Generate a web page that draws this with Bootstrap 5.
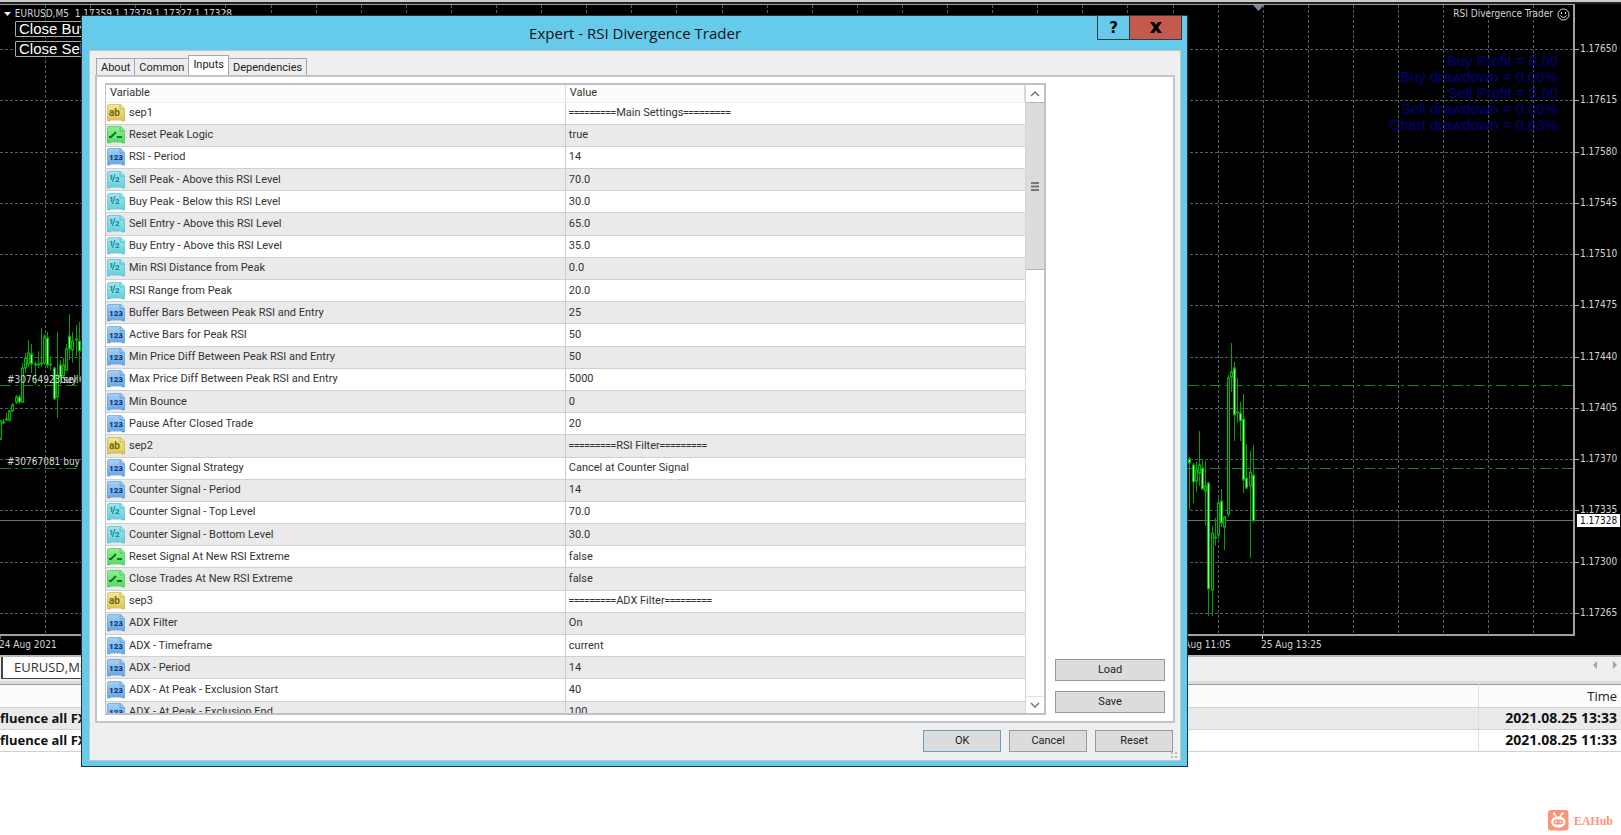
<!DOCTYPE html>
<html lang="en">
<head>
<meta charset="utf-8">
<meta name="viewport" content="width=device-width, initial-scale=1">
<title>Expert - RSI Divergence Trader</title>
<link href="https://cdn.jsdelivr.net/npm/bootstrap@5.3.0/dist/css/bootstrap.min.css" rel="stylesheet">
<style>
body{font:13px/20px "Open Sans","Noto Sans",sans-serif;color:#222;background:#fff;min-height:100vh;overflow:hidden}
button{font:inherit;color:inherit;padding:0}
.top-edge{height:4px;background:#222;border-top:2px solid #c9cac9}
.chart{height:651px;background:#000;color:#d4d4d4;font:10px/14px "DejaVu Sans Condensed","DejaVu Sans",sans-serif}
.plot{border:solid #a0a0a0;border-width:1px 2px 2px 0;height:632px}
.plot svg{left:0;top:0}
.axis{width:46px;height:632px;padding:38px 0 16px 5px}
.axis span{position:relative}
.axis span::before{content:"";position:absolute;left:-5px;top:7px;width:4px;height:1px;background:#aaa}
.price-now{right:1px;top:510px;width:43px;height:13px;line-height:13px;background:#fff;color:#111;padding-left:3px}
.dates{height:19px;line-height:18px}
.symbol-line{left:4px;top:2px}
.close-btns{left:15px;top:16px;width:110px;gap:4px}
.close-btns button{background:#000;border:1px solid #aaa;border-radius:1px;color:#fff;font:15px/14px "Liberation Sans",sans-serif;text-align:left;padding-left:3px;height:16px}
.expert{right:3px;top:2px;gap:4px}
.stats{right:15px;top:48px;color:#000080;font:15px/16px "Liberation Sans",sans-serif}
.tabstrip{height:29px;background:#efefef;border-top:2px solid #b8b8b8;border-bottom:3px solid #ddd}
.tabstrip .sheet{width:100px;height:22px;background:#fff;border:solid #444;border-width:0 1px 1px 2px;color:#333;text-decoration:none;padding-left:11px;margin-left:1px}
.log{table-layout:fixed;width:100%;border-top:1px solid #999}
.log th,.log td{height:22px;line-height:20px;padding:0 4px 1px 0;border-bottom:1px solid #d2d2d2;white-space:nowrap}
.log th{font-weight:400;background:#fcfcfc;height:23px}
.log td{font-weight:700;color:#111}
.log td.when{font-size:14px}
.log .when{width:143px;text-align:right;border-left:1px solid #ddd}
.log .alt td{background:#eaeaea}
.brand{right:8px;bottom:4px;color:#ff9377;font:700 12px/20px "Liberation Serif",serif;gap:5px}
.dialog{left:81px;top:15px;width:68.3vw;border:1px solid #253038;background:#66caea;padding:0 6px 5px 7px;font:11px/16px Roboto,"Liberation Sans",sans-serif}
.titlebar{height:34px;font:15px/34px "Open Sans","Noto Sans",sans-serif;color:#111}
.win-btns{right:-1px;top:-1px}
.win-btns button{display:flex;align-items:center;justify-content:center;height:25px;border:1px solid #333a40;background:#66caea;font:700 15px/22px "DejaVu Sans",sans-serif;color:#000}
.win-btns .help{width:33px}.win-btns .shut{width:53px;margin-left:-1px;background:#c4594e}
.client{background:#efefef;border:1px solid #c3c6c8;padding:5px 5px 8px}
.tabs{height:19px;padding-left:2px}
.tabs button{height:17px;line-height:15px;border:1px solid #a5a8b0;border-bottom:0;background:#ededed;margin-left:-1px}
.tabs .on{height:20px;background:#fff;padding-bottom:3px}
.pane{background:#fff;border:2px solid #c3c4ca;padding:6px 8px;gap:7px}
.listbox{border:2px solid #c0c1c8;border-left-width:1px;height:632px}
.vars{width:100%;table-layout:fixed;height:639px;color:#333}
.vars th{height:17px;line-height:16px;padding:0 4px;background:#fcfcfc;font-weight:400;font-size:11px;border-bottom:1px solid #eee;border-right:1px solid #ddd}
.vars td{padding:0 3px;line-height:16px;border-bottom:1px solid #d0d0d0;white-space:nowrap}
.vars td:first-child{border-right:1px solid #ccc;padding-left:1px}
.vars tbody tr:nth-child(even){background:#eaeaea}
.vars svg{width:18px;height:18px;margin-right:4px;vertical-align:middle}
.rule{font:700 9px/16px "Liberation Sans",sans-serif}
.scroller{width:19px;border-left:1px solid #d5d5d5}
.scroller button{height:17px;border:0;background:#fff;line-height:0}
.scroller .thumb{height:168px;background:#dcdcdc;border:solid #b5b5b5;border-width:1px 0}
.side{width:112px;padding:0 0 2px 2px;gap:10px}
.cmd{height:22px;background:#dcdcdc;border:1px solid #999;color:#222;font-size:11px}
.actions{gap:8px;padding:7px 2px 0}
.actions .cmd{width:78px}
.actions .ok{border-color:#6c9dc2}
.grip{right:2px;bottom:1px}
</style>
</head>
<body class="position-relative">
<div class="top-edge"></div>
<main class="chart position-relative">
  <div class="d-flex">
    <div class="plot flex-grow-1 position-relative overflow-hidden">
      <svg class="position-absolute w-100 h-100" id="plot" role="img" aria-label="EURUSD M5 candles"></svg>
      <div class="symbol-line position-absolute">
        <svg class="position-static" width="8" height="6"><path d="M0 1h7L3.500 5z" fill="#eee"/></svg>
        EURUSD,M5&nbsp; 1.17359 1.17379 1.17327 1.17328</div>
      <div class="close-btns position-absolute d-flex flex-column"><button type="button">Close Buy</button><button type="button">Close Sell</button></div>
      <div class="expert position-absolute d-flex align-items-center"><span>RSI Divergence Trader</span>
        <svg class="position-static" width="13" height="13" fill="none" stroke="#ddd"><circle cx="6.500" cy="6.500" r="5.500"/><path d="M3.500 7.500q3 4 6 0M4.500 4v2M8.500 4v2"/></svg></div>
      <div class="stats position-absolute text-end">Buy Profit = 0.00<br>Buy drawdown = 0.00%<br>Sell Profit = 0.00<br>Sell drawdown = 0.00%<br>Chart drawdown = 0.03%</div>
    </div>
    <div class="axis d-flex flex-column justify-content-between">
      <span>1.17650</span><span>1.17615</span><span>1.17580</span><span>1.17545</span><span>1.17510</span><span>1.17475</span><span>1.17440</span><span>1.17405</span><span>1.17370</span><span>1.17335</span><span>1.17300</span><span>1.17265</span>
    </div>
  </div>
  <div class="price-now position-absolute">1.17328</div>
  <svg class="dates d-block w-100" fill="#d4d4d4"><text x="-1" y="12">24 Aug 2021</text><text x="1170" y="12">25 Aug 11:05</text><text x="1261" y="12">25 Aug 13:25</text><path d="M0 0v3M1262.500 0v3" stroke="#ccc"/></svg>
</main>
<nav class="tabstrip d-flex justify-content-between">
  <a class="sheet" href="#">EURUSD,M5</a>
  <svg width="28" height="20" fill="#a2a2a2"><path d="M4 4v8L0 8zM20 4v8l4-4z"/></svg>
</nav>
<table class="log">
  <thead><tr><th></th><th class="when">Time</th></tr></thead>
  <tbody><tr class="alt"><td>fluence all FX</td><td class="when">2021.08.25 13:33</td></tr>
  <tr><td>fluence all FX</td><td class="when">2021.08.25 11:33</td></tr></tbody>
</table>

<section class="dialog position-absolute" role="dialog" aria-labelledby="dlgTitle">
  <header class="titlebar position-relative text-center"><span id="dlgTitle">Expert - RSI Divergence Trader</span>
    <div class="win-btns position-absolute d-flex"><button type="button" class="help">?</button><button type="button" class="shut" aria-label="Close"><svg width="12" height="11"><path d="M0 0h4l2 3 2-3h4L8 5.500 12 11H8L6 8l-2 3H0l4-5.500z"/></svg></button></div>
  </header>
  <div class="client position-relative">
    <div class="tabs d-flex align-items-end position-relative">
      <button type="button" class="px-1">About</button><button type="button" class="px-1">Common</button><button type="button" class="on px-1">Inputs</button><button type="button" class="px-1">Dependencies</button>
    </div>
    <div class="pane d-flex">
      <div class="listbox d-flex flex-grow-1 overflow-hidden">
        <table class="vars">
          <thead><tr><th>Variable</th><th>Value</th></tr></thead>
          <tbody id="rows"></tbody>
        </table>
        <div class="scroller d-flex flex-column flex-shrink-0">
          <button type="button" aria-label="Scroll up"><svg width="10" height="6"><path d="M1 5l4-4 4 4" fill="none" stroke="#777" stroke-width="1.500"/></svg></button>
          <div class="thumb d-flex align-items-center justify-content-center"><svg width="8" height="9" stroke="#777" stroke-width="2"><path d="M0 1h8M0 4.500h8M0 8h8"/></svg></div>
          <button type="button" class="mt-auto border-top" aria-label="Scroll down"><svg width="10" height="6"><path d="M1 1l4 4 4-4" fill="none" stroke="#777" stroke-width="1.500"/></svg></button>
        </div>
      </div>
      <div class="side d-flex flex-column justify-content-end flex-shrink-0"><button type="button" class="cmd">Load</button><button type="button" class="cmd">Save</button></div>
    </div>
    <div class="actions d-flex justify-content-end"><button type="button" class="cmd ok">OK</button><button type="button" class="cmd">Cancel</button><button type="button" class="cmd">Reset</button></div>
    <svg class="grip position-absolute" width="7" height="7" fill="#bbb"><path d="M0 0h2v2H0zM4 0h2v2H4zM0 4h2v2H0zM4 4h2v2H4z"/></svg>
  </div>
</section>

<div class="brand position-fixed d-flex align-items-center">
  <svg width="21" height="21"><rect width="20.500" height="20.500" rx="3" fill="#ff9377"/><path d="M6 3l2 4M14 3l-2 4" stroke="#fff" stroke-width="1.500"/><circle cx="6" cy="3.500" r="1.300" fill="#fff"/><circle cx="14.500" cy="3.500" r="1.300" fill="#fff"/><ellipse cx="10.300" cy="12" rx="7.300" ry="5.800" fill="#fff"/><rect x="5.500" y="9.500" width="9.500" height="5" rx="2.500" fill="#ff9377"/><circle cx="8" cy="12" r="1" fill="#fff"/><circle cx="12.500" cy="12" r="1" fill="#fff"/></svg>
  <span>EAHub</span>
</div>

<svg width="0" height="0" class="position-absolute" aria-hidden="true">
  <defs>
    <linearGradient id="gy" x2="0" y2="1"><stop stop-color="#f4ea92"/><stop offset="1" stop-color="#dcc653"/></linearGradient>
    <linearGradient id="gg" x2="0" y2="1"><stop stop-color="#8cf393"/><stop offset="1" stop-color="#58d664"/></linearGradient>
    <linearGradient id="gb" x2="0" y2="1"><stop stop-color="#a5d0f7"/><stop offset="1" stop-color="#66a5e4"/></linearGradient>
    <linearGradient id="gc" x2="0" y2="1"><stop stop-color="#9ce8ef"/><stop offset="1" stop-color="#67cddc"/></linearGradient>
    <path id="sheet" d="M.5 2Q.5.500 2 .5H14l3.500 4V17h-2.500l-1-1.500-1 1-1-1-1.500 1-1.500-1-1.500 1-1.500-1-1 1-1-1-1 1.500H.5z" stroke-opacity=".55"/>
    <path id="fold" d="M13 1v4h4" fill="none" stroke-opacity=".7"/>
  </defs>
</svg>

<script src="https://cdn.jsdelivr.net/npm/bootstrap@5.3.0/dist/js/bootstrap.bundle.min.js"></script>
<script>
// Type icons: s string, b bool, i integer, d double
const sheet = (stroke, fill) => `<g stroke="${stroke}"><use href="#sheet" fill="url(#${fill})"/><use href="#fold"/></g>`;
const icons = {
  s: sheet('#b7a23a', 'gy') + '<text x="2" y="12" font-size="10" font-weight="700" fill="#766a13">ab</text>',
  b: sheet('#35b748', 'gg') + '<path d="M2 11h2l5-5M10 11h5" stroke="#087a1c" stroke-width="2" fill="none"/>',
  i: sheet('#4d8ccb', 'gb') + '<text x="2" y="12" font-size="8" font-weight="900" fill="#0b3c7c">123</text>',
  d: sheet('#3fb2c2', 'gc') + '<path d="M8 3L5.500 11" stroke="#177f91" fill="none"/><text x="2" y="9" font-size="8" font-weight="700" fill="#177f91">1</text><text x="8" y="11" font-size="8" font-weight="700" fill="#177f91">2</text>'
};
// Input list: type | name | value
const inputs = `s|sep1|=Main Settings
b|Reset Peak Logic|true
i|RSI - Period|14
d|Sell Peak - Above this RSI Level|70.0
d|Buy Peak - Below this RSI Level|30.0
d|Sell Entry - Above this RSI Level|65.0
d|Buy Entry - Above this RSI Level|35.0
d|Min RSI Distance from Peak|0.0
d|RSI Range from Peak|20.0
i|Buffer Bars Between Peak RSI and Entry|25
i|Active Bars for Peak RSI|50
i|Min Price Diff Between Peak RSI and Entry|50
i|Max Price Diff Between Peak RSI and Entry|5000
i|Min Bounce|0
i|Pause After Closed Trade|20
s|sep2|=RSI Filter
i|Counter Signal Strategy|Cancel at Counter Signal
i|Counter Signal - Period|14
d|Counter Signal - Top Level|70.0
d|Counter Signal - Bottom Level|30.0
b|Reset Signal At New RSI Extreme|false
b|Close Trades At New RSI Extreme|false
s|sep3|=ADX Filter
i|ADX Filter|On
i|ADX - Timeframe|current
i|ADX - Period|14
i|ADX - At Peak - Exclusion Start|40
i|ADX - At Peak - Exclusion End|100`;
const bar = '<span class="rule">=========</span>';
document.getElementById('rows').innerHTML = inputs.split('\n').map(l => {
  const [t, n, v] = l.split('|');
  return `<tr><td><svg viewBox="0 0 18 18">${icons[t]}</svg>${n}</td><td>${v[0] === '=' ? bar + v.slice(1) + bar : v}</td></tr>`;
}).join('');

// Candles: x, high, body top, body bottom, low, 1 = falling (filled)
const candles = [
[0,420,421,439,440,0],[3,419,422,423,424,0],[6,413,419,420,421,0],[9,410,411,420,422,0],[12,403,405,411,412,0],[16,395,397,402,404,0],[19,395,397,402,404,1],[22,363,368,402,403,0],[25,353,358,368,373,0],[28,340,353,364,367,0],[31,344,354,364,373,1],[35,361,364,365,385,0],[38,351,364,365,368,0],[41,328,363,364,367,0],[44,334,337,363,365,0],[47,332,338,365,368,1],[50,356,364,365,370,0],[54,367,368,399,400,1],[57,332,375,397,418,0],[60,360,365,377,384,1],[63,358,365,376,377,0],[66,344,349,370,371,0],[69,314,336,349,360,1],[72,332,341,350,363,0],[76,325,339,340,356,0],[79,322,341,351,382,1],
[1189,457,459,463,510,1],[1193,463,465,482,503,1],[1196,462,470,481,492,0],[1199,431,465,473,486,0],[1202,459,468,489,490,1],[1205,461,486,491,525,0],[1208,482,483,589,616,1],[1212,526,533,590,616,0],[1215,518,537,538,546,0],[1218,498,503,535,539,0],[1221,489,501,523,527,1],[1224,516,517,527,550,0],[1228,375,378,514,517,0],[1231,343,372,377,392,0],[1234,362,368,415,441,1],[1237,378,412,413,423,0],[1240,402,413,421,441,1],[1243,394,419,480,493,1],[1246,444,478,488,489,1],[1250,451,472,486,558,0],[1253,445,475,521,522,1]];
const top0 = 5, W = 4000;
let g = '<rect width="100%" height="100%" fill="#000"/><g stroke="#53606c" stroke-dasharray="3 2">';
for (let k = 0; k < 60; k++) { const x = Math.round(45 + k * 45.1) + .5; g += `<path d="M${x} 0V640"/>`; }
for (let k = 0; k < 12; k++) { const y = Math.round(49 + k * 51.25 - top0) + .5; g += `<path d="M0 ${y}H${W}"/>`; }
g += '</g><path d="M0 515.500H4000" stroke="#65727e"/>';
g += '<path d="M0 380.500H4000M0 463.500H4000" stroke="#16821b" stroke-dasharray="11 4 3 4"/>';
g += '<path d="M1253 0h11l-5.500 6z" fill="#778899"/>';
g += candles.map(([x, h, a, b, l, f]) => `<path d="M${x + .5} ${h - top0}V${l - top0}" stroke="#00a000"/><rect x="${x - .5}" y="${a - top0}" width="2" height="${Math.max(1, b - a)}" fill="${f ? '#8cff8c' : '#002800'}" stroke="#00b400"/>`).join('');
g += '<g fill="#d4d4d4"><text x="7" y="378">#30764923 sell</text><text x="60" y="378">buy 0.01</text><text x="7" y="460">#30767081 buy 0.01</text></g>';
document.getElementById('plot').innerHTML = g;
</script>
</body>
</html>
